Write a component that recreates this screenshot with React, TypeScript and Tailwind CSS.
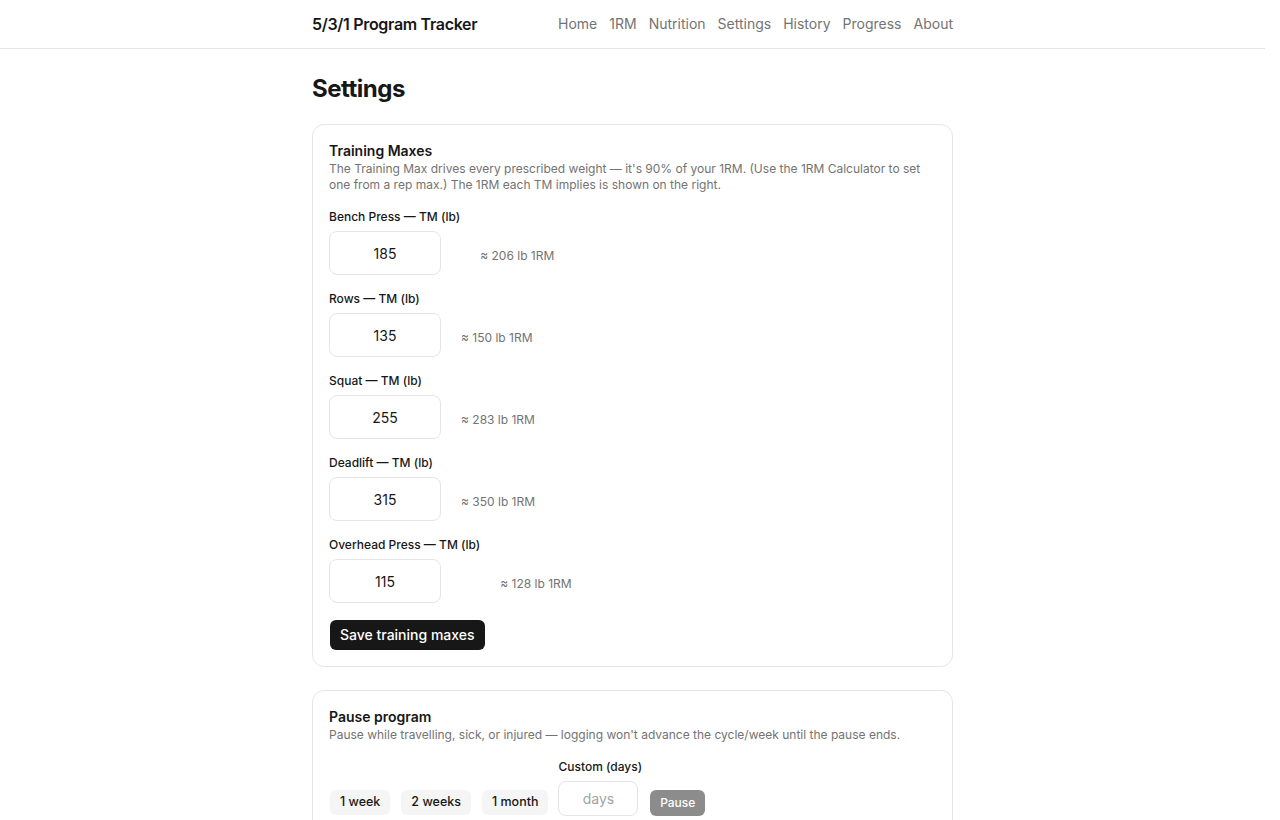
import React, { useState } from 'react';

type Lift = { name: string; tm: number };

const LIFTS: Lift[] = [
  { name: 'Bench Press', tm: 185 },
  { name: 'Rows', tm: 135 },
  { name: 'Squat', tm: 255 },
  { name: 'Deadlift', tm: 315 },
  { name: 'Overhead Press', tm: 115 },
];

const NAV = ['Home', '1RM', 'Nutrition', 'Settings', 'History', 'Progress', 'About'];

function Card({ title, description, children }: { title: string; description: string; children: React.ReactNode }) {
  return (
    <section className="rounded-xl border border-[#e5e5e5] bg-white p-4">
      <h2 className="text-sm font-semibold leading-5 text-[#171717]">{title}</h2>
      <p className="text-xs leading-4 text-[#737373]">{description}</p>
      <div className="mt-4">{children}</div>
    </section>
  );
}

function TmRow({ lift, value, onChange }: { lift: Lift; value: string; onChange: (v: string) => void }) {
  const n = Number(value);
  const oneRm = Math.round(n / 0.9);
  return (
    <div className="flex items-end gap-5">
      <label className="flex flex-col">
        <span className="mb-1.5 text-xs font-medium leading-4 text-[#171717]">{lift.name} — TM (lb)</span>
        <input
          value={value}
          onChange={(e) => onChange(e.target.value)}
          inputMode="numeric"
          className="h-11 w-28 rounded-lg border border-[#e5e5e5] bg-white text-center text-sm text-[#171717] outline-none"
        />
      </label>
      <span className="mb-[11px] text-xs leading-4 text-[#737373]">≈ {oneRm} lb 1RM</span>
    </div>
  );
}

export default function App() {
  const [values, setValues] = useState<string[]>(LIFTS.map((l) => String(l.tm)));
  const [days, setDays] = useState('');

  return (
    <div className="min-h-screen bg-white pr-[15px] text-[#171717]" style={{ fontFamily: 'Inter, "Noto Sans", sans-serif' }}>
      <header className="border-b border-[#e5e5e5]">
        <div className="mx-auto flex h-12 max-w-[641px] items-center justify-between">
          <span className="text-base font-semibold tracking-[-0.02em]">5/3/1 Program Tracker</span>
          <nav className="flex gap-3 text-sm text-[#737373]">
            {NAV.map((n) => (
              <a key={n} href="#" className="hover:text-[#171717]">{n}</a>
            ))}
          </nav>
        </div>
      </header>

      <main className="mx-auto max-w-[641px] pb-16 pt-6">
        <h1 className="mb-[19px] text-2xl font-bold leading-8 tracking-[-0.02em]">Settings</h1>

        <div className="flex flex-col gap-[23px]">
          <Card
            title="Training Maxes"
            description="The Training Max drives every prescribed weight — it's 90% of your 1RM. (Use the 1RM Calculator to set one from a rep max.) The 1RM each TM implies is shown on the right."
          >
            <div className="flex flex-col gap-4">
              {LIFTS.map((lift, i) => (
                <TmRow
                  key={lift.name}
                  lift={lift}
                  value={values[i]}
                  onChange={(v) => setValues((prev) => prev.map((p, j) => (j === i ? v : p)))}
                />
              ))}
            </div>
            <button className="ml-px mt-[17px] h-[30px] rounded-md bg-[#171717] px-2.5 text-sm font-medium text-white">
              Save training maxes
            </button>
          </Card>

          <Card
            title="Pause program"
            description="Pause while travelling, sick, or injured — logging won't advance the cycle/week until the pause ends."
          >
            <div className="ml-px flex items-end gap-2">
              <div className="mr-0.5 flex gap-[11px]">
                <button className="mb-px h-[25px] rounded-md bg-[#f5f5f5] px-2.5 text-[12.5px] font-medium">1 week</button>
                <button className="mb-px h-[25px] rounded-md bg-[#f5f5f5] px-2.5 text-[12.5px] font-medium">2 weeks</button>
                <button className="mb-px h-[25px] rounded-md bg-[#f5f5f5] px-2.5 text-[12.5px] font-medium">1 month</button>
              </div>
              <label className="flex flex-col">
                <span className="mb-1.5 text-xs font-medium leading-4">Custom (days)</span>
                <input
                  value={days}
                  onChange={(e) => setDays(e.target.value)}
                  placeholder="days"
                  className="h-[35px] w-20 rounded-lg border border-[#e5e5e5] text-center text-sm outline-none placeholder:text-[#a3a3a3]"
                />
              </label>
              <button disabled className="h-[26px] rounded-md bg-[#8c8c8c] px-2.5 text-xs font-medium text-white">
                Pause
              </button>
            </div>
            <p className="mt-3 text-xs leading-4 text-[#737373]">Not paused.</p>
          </Card>

          <Card title="Units" description="Choose how weights are shown across the app.">
            <div className="flex gap-2">
              <button className="h-[30px] rounded-md bg-[#171717] px-2.5 text-sm font-medium text-white">lb</button>
              <button className="h-[30px] rounded-md bg-[#f5f5f5] px-2.5 text-sm font-medium">kg</button>
            </div>
          </Card>

          <Card title="Data" description="Export your logged workouts or reset everything stored in this browser.">
            <div className="flex gap-2">
              <button className="h-[30px] rounded-md bg-[#f5f5f5] px-2.5 text-sm font-medium">Export JSON</button>
              <button className="h-[30px] rounded-md bg-[#dc2626] px-2.5 text-sm font-medium text-white">Reset all data</button>
            </div>
          </Card>
        </div>
      </main>
    </div>
  );
}
